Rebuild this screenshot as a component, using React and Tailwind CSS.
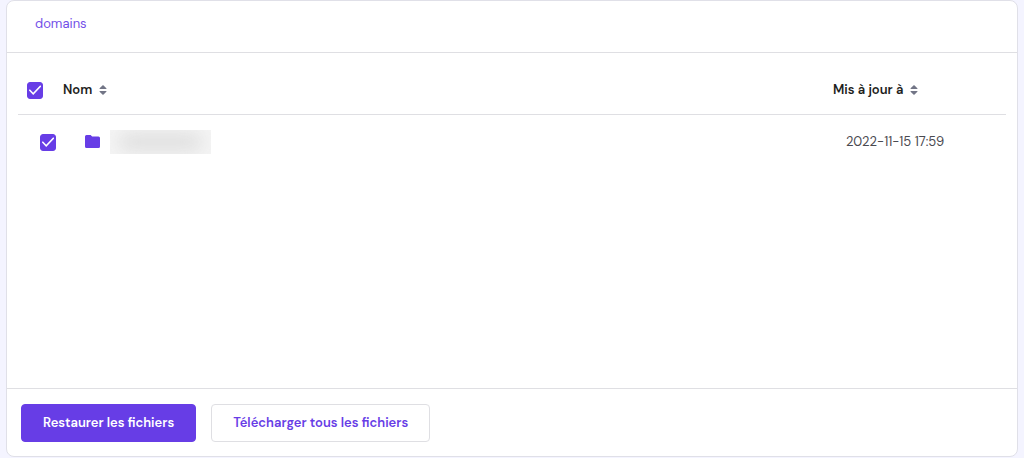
import { useState } from 'react';

const files = [{ id: 1, updatedAt: '2022-11-15 17:59' }];

function Checkbox({ label, checked, onChange }) {
  return (
    <span className="inline-grid place-items-center align-middle">
      <input
        type="checkbox"
        aria-label={label}
        checked={checked}
        onChange={(e) => onChange(e.target.checked)}
        className="col-start-1 row-start-1 h-[17px] w-4 appearance-none rounded-[3px] border border-[#673de6] checked:bg-[#673de6]"
      />
      {checked && (
        <svg
          viewBox="0 0 12 10"
          className="pointer-events-none col-start-1 row-start-1 h-[10px] w-3"
          fill="none"
          stroke="#fff"
          strokeWidth="1.5"
        >
          <path d="M0.3 4.8 4.2 8.8 11.8 0.8" />
        </svg>
      )}
    </span>
  );
}

function SortIcon() {
  return (
    <svg viewBox="0 0 8 10" className="h-[10px] w-2" fill="#727586" aria-hidden="true">
      <path d="M4 0 7.4 3.2V4H0.6V3.2Z" />
      <path d="M4 10 7.4 6.8V6H0.6V6.8Z" />
    </svg>
  );
}

function FolderIcon() {
  return (
    <svg viewBox="0 0 15 13" className="h-[13px] w-[15px]" fill="#673de6" aria-hidden="true">
      <path d="M1.5 0H5.6L7.1 1.6H13.5A1.5 1.5 0 0 1 15 3.1V11.5A1.5 1.5 0 0 1 13.5 13H1.5A1.5 1.5 0 0 1 0 11.5V1.5A1.5 1.5 0 0 1 1.5 0Z" />
    </svg>
  );
}

export default function App() {
  const [selected, setSelected] = useState([1]);
  const allSelected = selected.length === files.length;

  const toggle = (id, on) =>
    setSelected((prev) => (on ? [...prev, id] : prev.filter((item) => item !== id)));

  return (
    <div
      className="flex min-h-screen flex-col bg-[#f4f4ff] px-1.5 pb-px text-[13px] leading-5 text-[#1d1e20]"
      style={{ fontFamily: '"DM Sans", Inter, "Liberation Sans", sans-serif' }}
    >
      <main className="flex flex-1 flex-col rounded-lg border border-[#e0e0e8] bg-white">
        {/* Breadcrumb */}
        <nav className="border-b border-[#dfdfe3] px-7 pt-[13px] pb-[18px]">
          <a href="#domains" className="text-[#7350e8]">
            domains
          </a>
        </nav>

        {/* File list */}
        <div className="flex-1 px-[11px] pt-[13px]">
          <table className="w-full table-fixed border-collapse text-left">
            <thead>
              <tr className="h-[48px] border-b border-[#dfdfe3]">
                <th className="w-[45px] pl-[9px]">
                  <Checkbox
                    label="Tout"
                    checked={allSelected}
                    onChange={(on) => setSelected(on ? files.map((f) => f.id) : [])}
                  />
                </th>
                <th>
                  <button type="button" className="flex items-center gap-[7px] font-semibold">
                    Nom <SortIcon />
                  </button>
                </th>
                <th className="w-[173px]">
                  <button type="button" className="flex items-center gap-[7px] font-semibold">
                    Mis à jour à <SortIcon />
                  </button>
                </th>
              </tr>
            </thead>
            <tbody>
              {files.map((file) => (
                <tr key={file.id} className="h-[55px]">
                  <td className="pl-[22px]">
                    <Checkbox
                      label="Dossier"
                      checked={selected.includes(file.id)}
                      onChange={(on) => toggle(file.id, on)}
                    />
                  </td>
                  <td className="pl-[22px]">
                    <div className="flex items-center gap-2.5">
                      <FolderIcon />
                      {/* Hidden folder name */}
                      <div className="h-6 w-[101px] overflow-hidden bg-[#f5f5f5]">
                        <div className="mx-2 my-1 h-4 rounded-full bg-[#dcdcdc] blur-[9px]" />
                      </div>
                    </div>
                  </td>
                  <td className="pl-[13px] text-[#4a4a50]">{file.updatedAt}</td>
                </tr>
              ))}
            </tbody>
          </table>
        </div>

        {/* Actions */}
        <footer className="flex gap-[15px] border-t border-[#dfdfe3] px-3.5 pt-[15px] pb-3.5">
          <button
            type="button"
            className="h-[38px] rounded border border-[#673de6] bg-[#673de6] px-[21px] font-semibold text-white"
          >
            Restaurer les fichiers
          </button>
          <button
            type="button"
            className="h-[38px] rounded border border-[#dfdfe3] bg-white px-[21px] font-semibold text-[#673de6]"
          >
            Télécharger tous les fichiers
          </button>
        </footer>
      </main>
    </div>
  );
}
